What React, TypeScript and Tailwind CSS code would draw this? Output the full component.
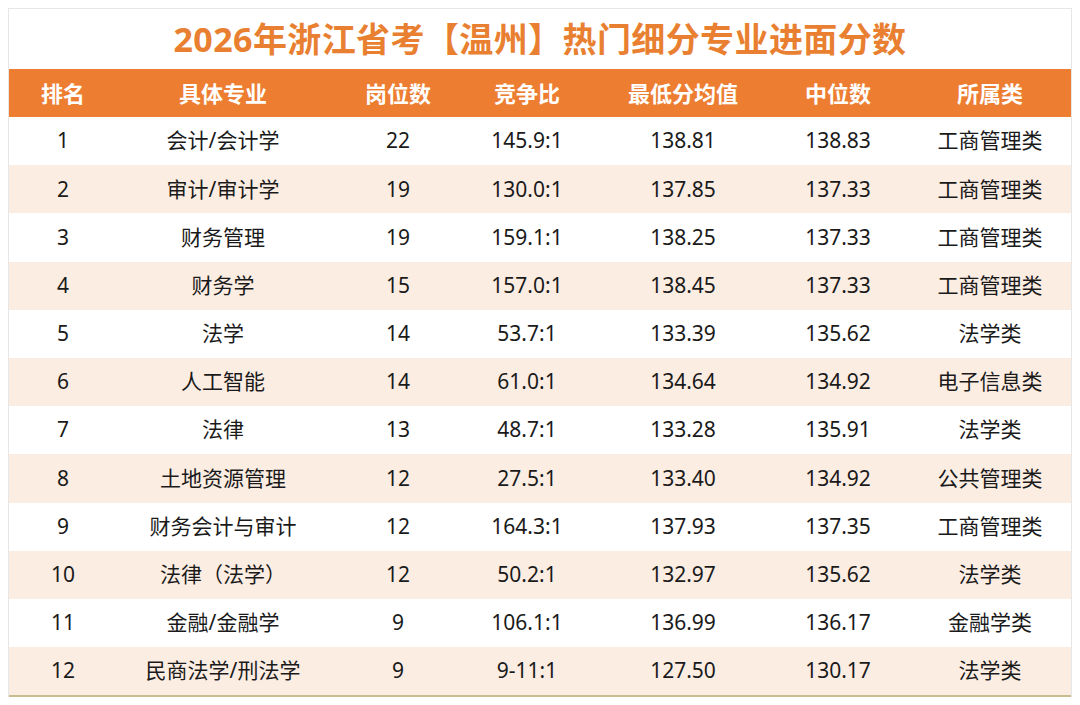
import React from "react";

const rows = [
  ["1", "会计/会计学", "22", "145.9:1", "138.81", "138.83", "工商管理类"],
  ["2", "审计/审计学", "19", "130.0:1", "137.85", "137.33", "工商管理类"],
  ["3", "财务管理", "19", "159.1:1", "138.25", "137.33", "工商管理类"],
  ["4", "财务学", "15", "157.0:1", "138.45", "137.33", "工商管理类"],
  ["5", "法学", "14", "53.7:1", "133.39", "135.62", "法学类"],
  ["6", "人工智能", "14", "61.0:1", "134.64", "134.92", "电子信息类"],
  ["7", "法律", "13", "48.7:1", "133.28", "135.91", "法学类"],
  ["8", "土地资源管理", "12", "27.5:1", "133.40", "134.92", "公共管理类"],
  ["9", "财务会计与审计", "12", "164.3:1", "137.93", "137.35", "工商管理类"],
  ["10", "法律（法学）", "12", "50.2:1", "132.97", "135.62", "法学类"],
  ["11", "金融/金融学", "9", "106.1:1", "136.99", "136.17", "金融学类"],
  ["12", "民商法学/刑法学", "9", "9-11:1", "127.50", "130.17", "法学类"],
];

const headers = ["排名", "具体专业", "岗位数", "竞争比", "最低分均值", "中位数", "所属类"];
const widths = ["w-[100px] pl-2", "w-[228px]", "w-[122px]", "w-[136px]", "w-[176px]", "w-[134px]", "w-[166px] pl-1"];

export default function App() {
  return (
    <div
      className="w-[1080px] h-[705px] bg-white overflow-hidden pt-2 px-2"
      style={{ fontFamily: '"Noto Sans", "Noto Sans CJK SC", sans-serif' }}
    >
      <div className="border-x border-t border-[#e6e6e6] w-[1064px]">
        <div className="h-[60px] flex items-center justify-center text-[#e97f31] text-[34px] font-bold tracking-[0.4px] pt-[1px]">
          2026年浙江省考【温州】热门细分专业进面分数
        </div>
        <div className="h-[48px] bg-[#ed7d31] flex items-center text-white text-[22px] font-bold">
          {headers.map((h, i) => (
            <div key={h} className={`${widths[i]} text-center`}>
              {h}
            </div>
          ))}
        </div>
        {rows.map((r, ri) => (
          <div
            key={ri}
            className={`h-[48.2px] flex items-center text-[21px] text-[#1a1a1a] ${ri % 2 === 1 ? "bg-[#fcede3]" : "bg-white"}`}
          >
            {r.map((c, i) => (
              <div key={i} className={`${widths[i]} text-center`}>
                {c}
              </div>
            ))}
          </div>
        ))}
        <div className="h-[2px] bg-[#c9bc8f]" />
      </div>
    </div>
  );
}
